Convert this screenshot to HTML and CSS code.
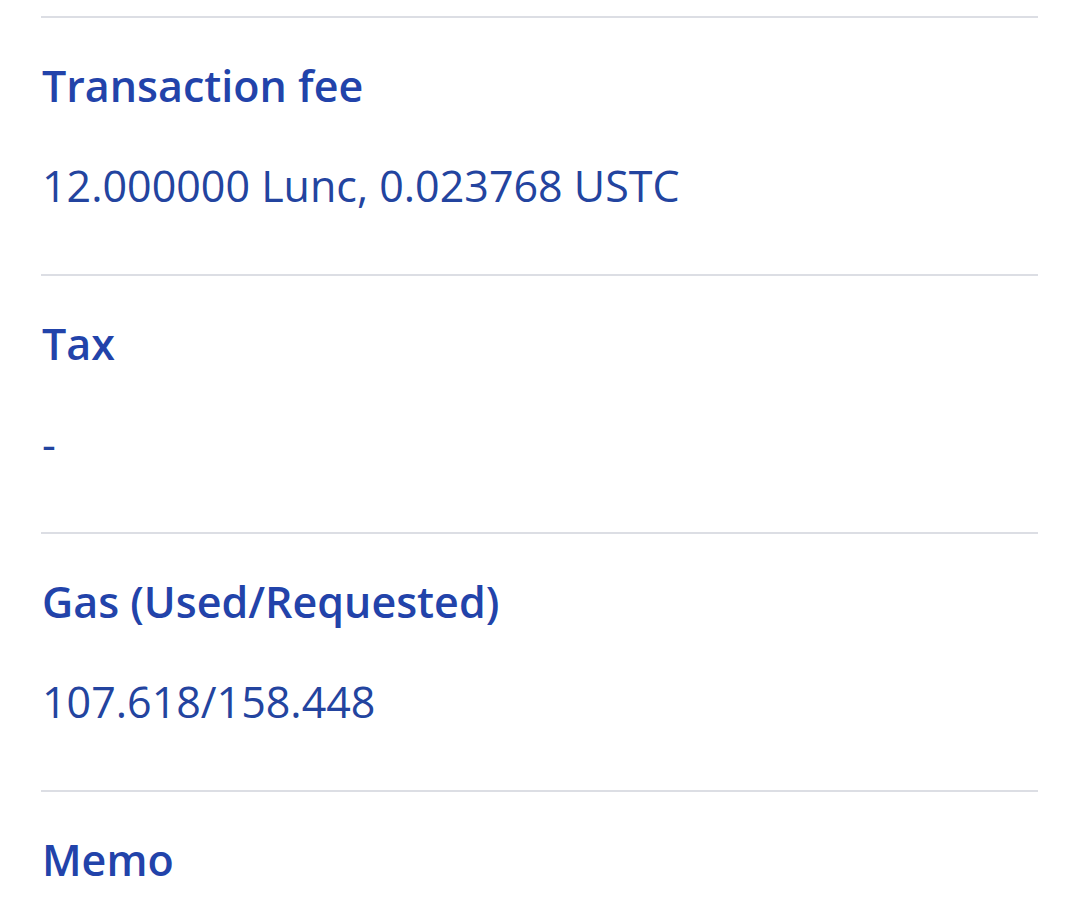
FILE: index.html
```html
<!DOCTYPE html>
<html lang="en">
<head>
<meta charset="utf-8">
<title>Transaction details</title>
<link rel="stylesheet" href="styles.css">
</head>
<body>
<div class="details">
  <div class="row">
    <div class="label">Transaction fee</div>
    <div class="value">12.000000 Lunc, 0.023768 USTC</div>
  </div>
  <div class="row">
    <div class="label">Tax</div>
    <div class="value">-</div>
  </div>
  <div class="row">
    <div class="label">Gas (Used/Requested)</div>
    <div class="value">107.618/158.448</div>
  </div>
  <div class="row">
    <div class="label">Memo</div>
  </div>
</div>
</body>
</html>
```
FILE: styles.css
```css
html, body {
  margin: 0;
  padding: 0;
  background: #ffffff;
}
body {
  font-family: "Open Sans", Lato, sans-serif;
  color: #2343a8;
}
.details {
  padding: 16px 37px 0 41px;
}
.row {
  border-top: 2px solid #dcdee4;
  padding: 42px 0 62px 1px;
  display: flex;
  flex-direction: column;
  gap: 48px;
}
.label {
  font-size: 43px;
  line-height: 52px;
  font-weight: 600;
  color: #2243aa;
}
.value {
  font-size: 43px;
  line-height: 52px;
  font-weight: 400;
  color: #23449f;
}
```
